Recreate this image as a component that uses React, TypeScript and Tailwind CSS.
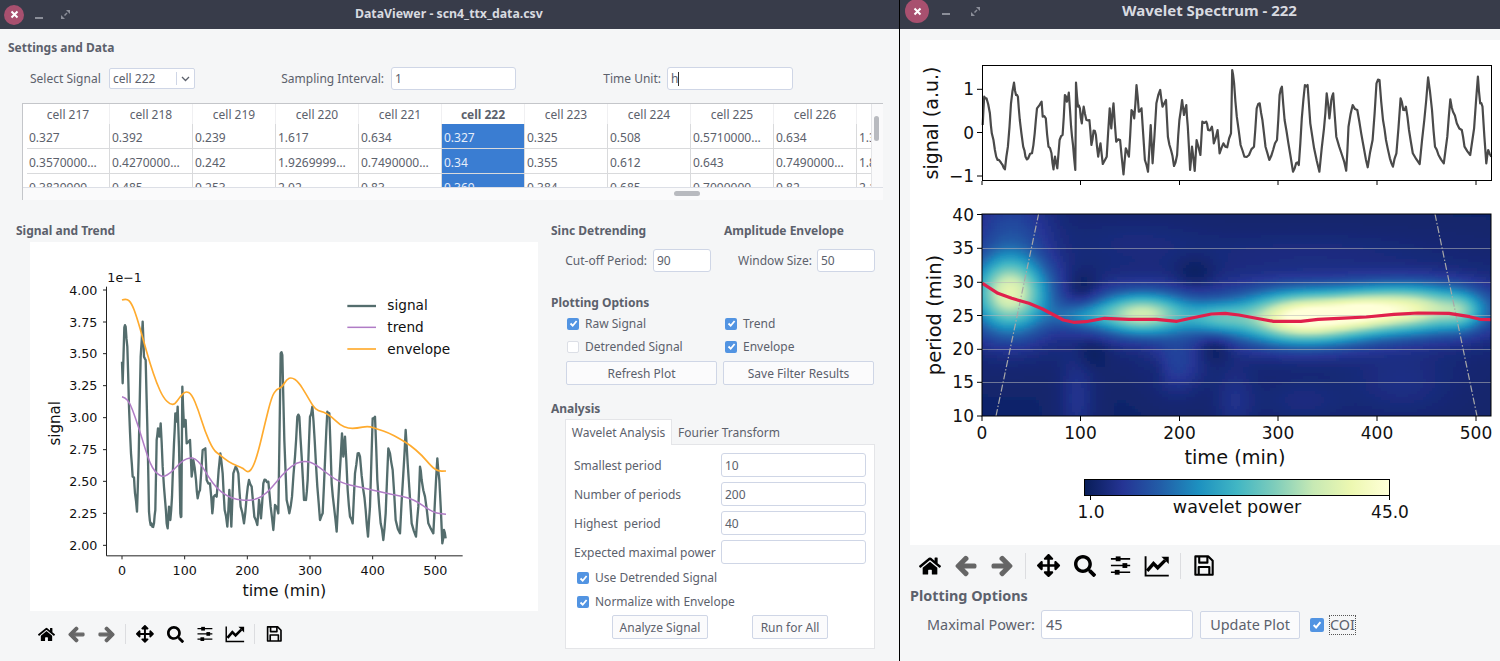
import type { ReactNode } from "react";
import { FaHome, FaArrowLeft, FaArrowRight, FaArrowsAlt, FaSearch } from "react-icons/fa";

const HEADERS = ["cell 217", "cell 218", "cell 219", "cell 220", "cell 221", "cell 222", "cell 223", "cell 224", "cell 225", "cell 226", "cell 227"];
const ROWS = [
  ["0.327", "0.392", "0.239", "1.617", "0.634", "0.327", "0.325", "0.508", "0.5710000…", "0.634", "1.317"],
  ["0.3570000…", "0.4270000…", "0.242", "1.9269999…", "0.7490000…", "0.34", "0.355", "0.612", "0.643", "0.7490000…", "1.812"],
  ["0.3829999", "0.485", "0.253", "2.02", "0.83", "0.369", "0.384", "0.685", "0.7090000", "0.82", "2.112"],
];

type Pt = [number, number];

// traced from the plots, in crop coordinates of the picture
const SIGNAL: Pt[] = [[306,365],[308,430],[313,262],[317,260],[322,320],[327,500],[333,640],[338,710],[342,712],[345,760],[351,815],[356,650],[362,350],[368,245],[372,350],[377,360],[382,560],[387,815],[392,855],[397,860],[402,850],[406,810],[410,600],[414,565],[418,590],[422,550],[428,680],[436,790],[440,850],[443,865],[447,800],[451,840],[456,770],[462,610],[466,520],[470,545],[473,500],[477,620],[481,820],[484,830],[487,440],[492,560],[497,540],[500,610],[510,600],[515,710],[520,660],[528,720],[533,775],[540,750],[548,630],[556,625],[560,720],[570,730],[577,820],[581,770],[590,770],[596,690],[601,640],[608,700],[614,810],[622,860],[628,750],[634,860],[640,700],[647,680],[655,700],[662,800],[672,850],[680,770],[687,720],[695,740],[703,830],[712,855],[717,780],[723,835],[730,730],[737,720],[745,725],[752,800],[760,870],[765,795],[775,820],[782,340],[787,345],[793,600],[800,780],[808,820],[816,770],[825,650],[832,530],[838,530],[845,650],[852,780],[858,780],[863,720],[870,530],[877,500],[884,600],[892,740],[900,840],[908,820],[916,640],[922,515],[928,520],[935,730],[942,800],[950,875],[958,720],[966,580],[970,650],[975,590],[983,750],[990,830],[998,850],[1005,700],[1013,640],[1020,650],[1030,750],[1037,810],[1044,890],[1050,800],[1058,535],[1065,530],[1072,720],[1082,850],[1090,900],[1097,820],[1105,625],[1110,640],[1118,690],[1127,840],[1140,880],[1150,700],[1157,570],[1163,670],[1175,850],[1188,890],[1195,800],[1200,680],[1205,720],[1215,770],[1225,850],[1240,880],[1245,780],[1252,655],[1258,720],[1267,910],[1272,870],[1277,895]];
const TREND: Pt[] = [[306,470],[315,472],[330,490],[345,530],[360,575],[375,625],[390,670],[405,695],[420,707],[432,710],[450,700],[470,680],[490,660],[510,653],[525,655],[545,675],[565,710],[590,745],[620,768],[650,778],[680,782],[710,778],[740,760],[770,725],[800,690],[830,668],[860,663],[885,672],[915,695],[945,718],[975,732],[1010,740],[1050,748],[1090,758],[1130,766],[1165,773],[1195,787],[1225,808],[1250,820],[1278,823]];
const ENVELOPE: Pt[] = [[306,180],[320,175],[335,190],[350,230],[370,300],[390,370],[410,430],[430,473],[450,493],[465,493],[480,470],[497,453],[515,462],[535,510],[555,575],[580,630],[600,645],[625,665],[650,677],[670,685],[683,698],[698,685],[715,635],[735,550],[755,470],[770,447],[785,443],[800,418],[815,412],[835,425],[860,465],[880,500],[895,513],[910,515],[935,530],[960,555],[985,565],[1010,565],[1045,558],[1075,568],[1105,578],[1140,597],[1170,615],[1205,645],[1235,680],[1255,694],[1278,693]];
const TOP_SIGNAL: Pt[] = [[216,255],[220,170],[226,175],[235,220],[240,280],[248,330],[255,360],[262,365],[268,375],[274,388],[282,320],[290,190],[298,128],[303,165],[308,170],[313,240],[322,320],[328,350],[335,355],[345,340],[352,280],[358,205],[370,185],[373,230],[381,235],[388,320],[396,340],[401,388],[405,350],[411,385],[417,300],[425,285],[431,165],[436,185],[441,158],[447,260],[452,315],[458,390],[460,128],[465,200],[470,205],[475,250],[480,200],[487,240],[495,240],[500,315],[506,272],[512,285],[518,350],[524,310],[530,372],[540,350],[548,205],[552,265],[558,190],[565,305],[575,300],[584,403],[590,325],[598,350],[605,210],[612,235],[618,135],[624,215],[631,205],[640,360],[648,395],[655,255],[660,370],[670,190],[680,150],[686,200],[695,180],[700,290],[708,330],[716,378],[724,345],[730,240],[737,180],[742,225],[748,195],[752,260],[758,390],[763,320],[770,393],[775,300],[785,345],[790,245],[800,245],[805,270],[815,260],[820,310],[830,270],[835,340],[845,310],[855,322],[865,280],[868,90],[873,130],[880,230],[890,315],[900,350],[912,345],[925,320],[932,205],[940,190],[947,240],[955,320],[965,360],[975,330],[985,300],[992,165],[998,140],[1005,240],[1015,310],[1027,395],[1035,370],[1042,375],[1050,235],[1058,135],[1065,135],[1072,250],[1082,325],[1096,395],[1108,265],[1115,160],[1122,235],[1127,180],[1132,160],[1140,290],[1155,345],[1166,392],[1172,260],[1183,195],[1195,210],[1205,280],[1213,330],[1222,382],[1235,300],[1245,130],[1253,120],[1262,240],[1270,300],[1280,355],[1288,380],[1297,340],[1308,175],[1315,210],[1322,200],[1330,270],[1340,340],[1358,372],[1370,240],[1380,112],[1390,210],[1398,320],[1407,345],[1421,370],[1430,290],[1438,178],[1445,215],[1455,250],[1468,270],[1475,320],[1490,345],[1500,265],[1510,110],[1516,190],[1522,200],[1532,370],[1537,330],[1545,350]];
const RIDGE: Pt[] = [[65,235],[110,265],[150,280],[200,295],[240,312],[300,345],[330,352],[365,350],[420,340],[490,343],[570,343],[630,349],[670,340],[730,327],[770,325],[810,330],[860,340],[910,349],[990,349],[1040,343],[1100,340],[1180,336],[1260,328],[1330,324],[1420,325],[1480,335],[1510,343],[1543,344]];

const toPoints = (pts: Pt[]) => pts.map(([x, y]) => `${x.toFixed(1)},${y.toFixed(1)}`).join(" ");

// adds wobbling midpoints so the trace keeps its measured look
const roughen = (pts: Pt[], amp: number): Pt[] =>
  pts.flatMap((p, i) => {
    const n = pts[i + 1];
    if (!n) return [p];
    const mid: Pt = [(p[0] + n[0]) / 2, (p[1] + n[1]) / 2 + Math.sin(i * 2.7) * amp];
    return [p, mid];
  });

// midpoint smoothing for the slow curves
const smooth = (pts: Pt[]) => {
  let d = `M${pts[0][0]} ${pts[0][1]}`;
  for (let i = 1; i < pts.length - 1; i++) {
    const mx = (pts[i][0] + pts[i + 1][0]) / 2;
    const my = (pts[i][1] + pts[i + 1][1]) / 2;
    d += ` Q${pts[i][0]} ${pts[i][1]} ${mx} ${my}`;
  }
  const last = pts[pts.length - 1];
  return `${d} L${last[0]} ${last[1]}`;
};

const YLGNBU = ["#081d58", "#253494", "#225ea8", "#1d91c0", "#41b6c4", "#7fcdbb", "#c7e9b4", "#edf8b1", "#ffffd9"];
const hex = (c: string) => [1, 3, 5].map((i) => parseInt(c.slice(i, i + 2), 16));
const colormap = (t: number) => {
  const p = Math.min(Math.max(t, 0), 1) * (YLGNBU.length - 1);
  const i = Math.min(Math.floor(p), YLGNBU.length - 2);
  const a = hex(YLGNBU[i]);
  const b = hex(YLGNBU[i + 1]);
  const f = p - i;
  return `rgb(${a.map((v, k) => Math.round(v + (b[k] - v) * f)).join(",")})`;
};

// x, y, sx, sy, amp in heatmap pixels
const BLOBS: number[][] = [
  [28, 78, 25, 26, 0.76],
  [29, 10, 28, 22, 0.12],
  [260, 95, 250, 30, 0.08],
  [160, 100, 32, 14, 0.66],
  [100, 102, 22, 9, 0.16],
  [235, 104, 22, 11, 0.28],
  [322, 104, 44, 17, 0.92],
  [425, 95, 46, 16, 0.76],
  [378, 98, 22, 12, 0.16],
  [480, 98, 14, 13, 0.2],
  [195, 150, 18, 20, 0.11],
  [95, 185, 12, 30, 0.07],
  [253, 187, 14, 24, 0.06],
  [320, 187, 30, 16, 0.04],
  [150, 25, 50, 16, 0.03],
  [330, 35, 90, 14, 0.03],
  [420, 170, 36, 22, 0.05],
];
const HOLES: number[][] = [
  [100, 76, 13, 13, 0.08],
  [213, 60, 14, 12, 0.06],
  [233, 133, 12, 11, 0.07],
  [110, 138, 12, 11, 0.05],
  [175, 155, 8, 10, 0.03],
];

const field = (x: number, y: number) => {
  let v = 0.04;
  for (const [bx, by, sx, sy, a] of BLOBS) {
    v += a * Math.exp(-((x - bx) ** 2) / (2 * sx * sx) - ((y - by) ** 2) / (2 * sy * sy));
  }
  for (const [bx, by, sx, sy, a] of HOLES) {
    v -= a * Math.exp(-((x - bx) ** 2) / (2 * sx * sx) - ((y - by) ** 2) / (2 * sy * sy));
  }
  return v;
};

const CELL = 3;
const HEAT_CELLS: { x: number; y: number; fill: string }[] = [];
for (let y = -6; y < 208; y += CELL) {
  for (let x = -6; x < 515; x += CELL) {
    HEAT_CELLS.push({ x: 982 + x, y: 214 + y, fill: colormap(field(x + CELL / 2, y + CELL / 2)) });
  }
}

const Section = ({ children, className = "" }: { children: ReactNode; className?: string }) => (
  <div className={`h-4 leading-[18px] text-[12px] font-bold text-[#5c616c] ${className}`}>{children}</div>
);

const Field = ({ value, h = "h-6", className = "", children }: { value?: string; h?: string; className?: string; children?: ReactNode }) => (
  <div className={`flex items-center px-[3px] bg-white border border-[#cfd6e6] rounded-[3px] text-[12px] text-[#5c616c] ${h} ${className}`}>
    {value}
    {children}
  </div>
);

const Check = ({ checked, label, className = "" }: { checked?: boolean; label: string; className?: string }) => (
  <div className={`flex items-center gap-[6px] text-[12px] text-[#5c616c] ${className}`}>
    {checked ? (
      <div className="w-3 h-3 rounded-[2px] bg-[#5294e2] flex items-center justify-center">
        <svg width="9" height="9" viewBox="0 0 9 9" fill="none" stroke="white" strokeWidth="1.8">
          <path d="M1.5 4.5 L3.7 6.7 L7.6 2" />
        </svg>
      </div>
    ) : (
      <div className="w-3 h-3 rounded-[2px] bg-white border border-[#dcdfe6]" />
    )}
    <span>{label}</span>
  </div>
);

const Btn = ({ children, className = "" }: { children: ReactNode; className?: string }) => (
  <div className={`h-6 pt-px flex items-center justify-center bg-[#fbfbfc] border border-[#cfd6e6] rounded-[2px] text-[12px] text-[#5c616c] ${className}`}>
    {children}
  </div>
);

const TitleBar = ({ title, compact }: { title: string; compact?: boolean }) => (
  <div className={`h-[29px] shrink-0 bg-[#383c4a] flex items-center relative ${compact ? "pb-[7px]" : ""}`}>
    <div className={`rounded-full bg-[#a8506f] flex items-center justify-center ${compact ? "w-6 h-6 ml-[5px]" : "w-5 h-5 ml-[4px]"}`}>
      <svg width="9" height="9" viewBox="0 0 9 9" stroke="white" strokeWidth="2">
        <path d="M1.5 1.5 L7.5 7.5 M7.5 1.5 L1.5 7.5" />
      </svg>
    </div>
    <div className={`w-2 h-[2px] bg-[#8b8e99] mt-[6px] ${compact ? "ml-[13px]" : "ml-[11px]"}`} />
    <svg className={compact ? "ml-[21px]" : "ml-[18px]"} width="9" height="9" viewBox="0 0 9 9" fill="#8b8e99">
      <path d="M5 0 H9 V4 Z M0 5 L4 9 H0 Z M3 5 L5.5 2.5 L6.5 3.5 L4 6 Z" />
    </svg>
    <div className={`absolute font-bold text-[#d8dae0] whitespace-nowrap ${compact ? "left-[222px] -top-px text-[15px]" : "left-[355px] top-[5px] text-[12.3px]"}`}>
      {title}
    </div>
  </div>
);

const Table = () => (
  <div className="ml-[22px] mt-[13px] w-[861px] h-[97px] border-t border-l border-[#c4c6ca] bg-white flex flex-col">
    <div className="flex h-[84px] border-b border-[#dcdfe6]">
      <div className="w-1 shrink-0" />
      <div className="flex-1 overflow-hidden">
        <div className="grid grid-cols-[repeat(11,83px)] grid-rows-[20px_25px_25px_25px] w-[913px]">
          {HEADERS.map((h, i) => (
            <div
              key={h}
              className={`pt-px flex items-center justify-center text-[12px] text-[#5c616c] border-r border-[#f0f0f2] ${i === 5 ? "font-bold" : ""}`}
            >
              {h}
            </div>
          ))}
          {ROWS.flatMap((row, r) =>
            row.map((v, i) => (
              <div
                key={`${r}-${i}`}
                className={`px-[2px] text-[12px] leading-[27px] whitespace-nowrap overflow-hidden border-b border-r border-[#d9dadc] ${i === 5 ? "bg-[#3a7dd2] text-[#e6eefa]" : "text-[#5c616c]"}`}
              >
                {v}
              </div>
            ))
          )}
        </div>
      </div>
      <div className="w-3 shrink-0 bg-[#fafafb] border-l border-[#e4e5e8] pt-3 pl-[2px]">
        <div className="w-[5px] h-[25px] rounded-full bg-[#b8babf]" />
      </div>
    </div>
    <div className="h-3 bg-[#fafafb] pt-[3px]">
      <div className="ml-[651px] w-[26px] h-[5px] rounded-full bg-[#b8babf]" />
    </div>
  </div>
);

const SignalPlot = () => {
  const yTicks: [string, number][] = [["4.00", 150], ["3.75", 246], ["3.50", 341], ["3.25", 437], ["3.00", 533], ["2.75", 629], ["2.50", 724], ["2.25", 820], ["2.00", 916]];
  const xTicks: [string, number][] = [["0", 306], ["100", 494], ["200", 682], ["300", 870], ["400", 1058], ["500", 1246]];
  return (
    <svg
      className="block ml-[30px] mt-1 bg-white font-['DejaVu_Sans',sans-serif]"
      width="508"
      height="369"
      viewBox="30 6 1524 1107"
    >
      <polyline points={toPoints(roughen(SIGNAL, 7))} fill="none" stroke="#546d6d" strokeWidth="7" strokeLinejoin="round" />
      <path d={smooth(TREND)} fill="none" stroke="#b07cc6" strokeWidth="4.5" />
      <path d={smooth(ENVELOPE)} fill="none" stroke="#ffab2e" strokeWidth="5" />
      <path d="M259.5 140 V947.5 H1328" fill="none" stroke="#222" strokeWidth="3" />
      {yTicks.map(([l, y]) => (
        <g key={l}>
          <path d={`M249 ${y} H259`} stroke="#222" strokeWidth="3" />
          <text x="232" y={y + 14} textAnchor="end" fontSize="38" fill="#111">{l}</text>
        </g>
      ))}
      {xTicks.map(([l, x]) => (
        <g key={l}>
          <path d={`M${x} 948 V958`} stroke="#222" strokeWidth="3" />
          <text x={x} y="1004" textAnchor="middle" fontSize="38" fill="#111">{l}</text>
        </g>
      ))}
      <text x="262" y="127" fontSize="38" fill="#111">1e−1</text>
      <text x="793" y="1068" textAnchor="middle" fontSize="48" fill="#111">time (min)</text>
      <text transform="translate(119 550) rotate(-90)" textAnchor="middle" fontSize="45" fill="#111">signal</text>
      <path d="M982 198 H1068" stroke="#546d6d" strokeWidth="7" />
      <path d="M982 262 H1068" stroke="#b07cc6" strokeWidth="4.5" />
      <path d="M982 327 H1068" stroke="#ffab2e" strokeWidth="5" />
      <text x="1102" y="210" fontSize="41" fill="#111">signal</text>
      <text x="1102" y="276" fontSize="41" fill="#111">trend</text>
      <text x="1102" y="341" fontSize="41" fill="#111">envelope</text>
    </svg>
  );
};

const SpectrumPlot = () => {
  const topY: [string, number][] = [["1", 89.3], ["0", 132.5], ["−1", 176]];
  const xs: [string, number][] = [["0", 982], ["100", 1080.5], ["200", 1179.5], ["300", 1278], ["400", 1377], ["500", 1476]];
  const hmY: [string, number][] = [["40", 214.5], ["35", 248.3], ["30", 282.3], ["25", 315.5], ["20", 349.3], ["15", 382.3], ["10", 416]];
  const signal = roughen(TOP_SIGNAL, 6).map(([x, y]): Pt => [900 + x / 2.613, 40 + y / 3]);
  const ridge = RIDGE.map(([x, y]): Pt => [960 + x / 2.904, 205 + y / 3]);
  return (
    <svg
      className="block ml-[10px] mt-[11px] bg-white font-['DejaVu_Sans',sans-serif]"
      width="590"
      height="505"
      viewBox="910 40 590 505"
    >
      <defs>
        <clipPath id="heat-clip">
          <rect x="982" y="214" width="509" height="202" />
        </clipPath>
        <filter id="heat-blur" x="0" y="0" width="100%" height="100%">
          <feGaussianBlur stdDeviation="1.2" />
        </filter>
        <linearGradient id="cbar">
          {YLGNBU.map((c, i) => (
            <stop key={c} offset={i / (YLGNBU.length - 1)} stopColor={c} />
          ))}
        </linearGradient>
      </defs>

      {/* signal panel */}
      <polyline points={toPoints(signal)} fill="none" stroke="#4a4a4a" strokeWidth="2.2" strokeLinejoin="round" />
      <rect x="982.5" y="65.5" width="509" height="115" fill="none" stroke="#000" />
      {topY.map(([l, y]) => (
        <g key={l}>
          <path d={`M977 ${y} H982`} stroke="#000" />
          <text x="974" y={y + 6} textAnchor="end" fontSize="17" fill="#111">{l}</text>
        </g>
      ))}
      {xs.map(([l, x]) => (
        <path key={l} d={`M${x} 181 V185`} stroke="#000" />
      ))}
      <text transform="translate(938 123) rotate(-90)" textAnchor="middle" fontSize="19" fill="#111">signal (a.u.)</text>

      {/* wavelet heatmap */}
      <g clipPath="url(#heat-clip)">
        <g filter="url(#heat-blur)">
          {HEAT_CELLS.map((c) => (
            <rect key={`${c.x}-${c.y}`} x={c.x} y={c.y} width={CELL + 0.5} height={CELL + 0.5} fill={c.fill} />
          ))}
        </g>
        {[248.5, 282.5, 315.5, 349.5, 382.5].map((y) => (
          <path key={y} d={`M982 ${y} H1491`} stroke="#b8b8b8" strokeOpacity="0.55" />
        ))}
        <path d="M996 416 L1038.6 214 M1435 214 L1477 416" stroke="#a8a8a8" strokeWidth="1.2" strokeDasharray="7 2 1.5 2" fill="none" />
        <polyline points={toPoints(ridge)} fill="none" stroke="#e0204c" strokeWidth="3.2" strokeLinejoin="round" />
      </g>
      <rect x="982" y="214" width="509" height="202" fill="none" stroke="#000" />
      {hmY.map(([l, y]) => (
        <g key={l}>
          <path d={`M977 ${y} H982`} stroke="#000" />
          <text x="974" y={y + 6} textAnchor="end" fontSize="17" fill="#111">{l}</text>
        </g>
      ))}
      {xs.map(([l, x]) => (
        <g key={l}>
          <path d={`M${x} 416 V421`} stroke="#000" />
          <text x={x} y="439" textAnchor="middle" fontSize="17" fill="#111">{l}</text>
        </g>
      ))}
      <text transform="translate(941 315) rotate(-90)" textAnchor="middle" fontSize="19.5" fill="#111">period (min)</text>
      <text x="1235" y="464" textAnchor="middle" fontSize="19.3" fill="#111">time (min)</text>

      {/* colorbar */}
      <rect x="1084.5" y="479.5" width="305" height="16" fill="url(#cbar)" stroke="#000" />
      <path d="M1090.5 496 V500 M1389.5 496 V500" stroke="#000" />
      <text x="1091" y="518" textAnchor="middle" fontSize="17" fill="#111">1.0</text>
      <text x="1390" y="518" textAnchor="middle" fontSize="17" fill="#111">45.0</text>
      <text x="1237" y="513" textAnchor="middle" fontSize="17.5" fill="#111">wavelet power</text>
    </svg>
  );
};

const SlidersIcon = ({ size }: { size: number }) => (
  <svg width={size} height={size} viewBox="0 0 24 24" fill="#000">
    <path d="M2 5 H22 M2 12 H22 M2 19 H22" stroke="#000" strokeWidth="1.7" />
    <rect x="7" y="2.5" width="5" height="5" />
    <rect x="14" y="9.5" width="5" height="5" />
    <rect x="6" y="16.5" width="5" height="5" />
  </svg>
);

const ChartIcon = ({ size }: { size: number }) => (
  <svg width={size} height={size} viewBox="0 0 24 24" fill="none" stroke="#000">
    <path d="M1.5 3 V21.5 H23.5" strokeWidth="1.8" />
    <path d="M3 17 L9 10 L13 14 L20 7" strokeWidth="3.2" />
    <path d="M16.5 3.5 H23.5 V10.5 Z" fill="#000" strokeWidth="0" />
  </svg>
);

const SaveIcon = ({ size }: { size: number }) => (
  <svg width={size} height={size} viewBox="0 0 24 24" fill="none" stroke="#000" strokeWidth="2.2" strokeLinejoin="round">
    <path d="M3.5 2.5 H17 L21.5 7 V21.5 H3.5 Z" />
    <path d="M7.5 2.5 V9 H16 V2.5" />
    <path d="M7 21.5 V13.5 H18 V21.5" />
  </svg>
);

const Toolbar = ({ size, cell, gap, className = "" }: { size: number; cell: string; gap: string; className?: string }) => {
  const item = (icon: ReactNode) => <div className={`flex justify-center ${cell}`}>{icon}</div>;
  const sep = (
    <div className={gap}>
      <div className="w-px h-full bg-[#dcdde0]" />
    </div>
  );
  return (
    <div className={`flex items-center text-black ${className}`}>
      {item(<FaHome size={size} />)}
      {item(<FaArrowLeft size={size} color="#666" stroke="#666" strokeWidth={40} />)}
      {item(<FaArrowRight size={size} color="#666" stroke="#666" strokeWidth={40} />)}
      {sep}
      {item(<FaArrowsAlt size={size * 1.05} />)}
      {item(<FaSearch size={size} />)}
      {item(<SlidersIcon size={size * 1.05} />)}
      {item(<ChartIcon size={size * 1.15} />)}
      {sep}
      {item(<SaveIcon size={size * 1.05} />)}
    </div>
  );
};

const SidePanel = () => (
  <div className="w-[349px] shrink-0">
    <div className="flex">
      <Section className="w-[173px]">Sinc Detrending</Section>
      <Section>Amplitude Envelope</Section>
    </div>
    <div className="flex items-center mt-[11px] text-[12px] text-[#5c616c]">
      <div className="w-[102px] text-right pr-[6px] pt-px">Cut-off Period:</div>
      <Field value="90" h="h-[23px]" className="w-[58px] pt-px" />
      <div className="w-[106px] text-right pr-[5px] pt-px">Window Size:</div>
      <Field value="50" h="h-[23px]" className="w-[58px] pt-px" />
    </div>

    <Section className="mt-[22px]">Plotting Options</Section>
    <div className="mt-[2px] pl-4 grid grid-cols-[158px_1fr] auto-rows-[23px] items-center">
      <Check checked label="Raw Signal" />
      <Check checked label="Trend" />
      <Check label="Detrended Signal" />
      <Check checked label="Envelope" />
    </div>
    <div className="flex gap-[6px] ml-[15px] mt-[3px]">
      <Btn className="w-[151px]">Refresh Plot</Btn>
      <Btn className="w-[151px]">Save Filter Results</Btn>
    </div>

    <Section className="mt-[15px]">Analysis</Section>
    <div className="ml-[14px] mt-[3px] flex items-end h-[26px] text-[12px] text-[#5c616c]">
      <div className="w-[107px] h-[26px] bg-white border border-b-0 border-[#e4e5e8] flex items-center justify-center relative z-10">Wavelet Analysis</div>
      <div className="pl-[6px] pb-[3px]">Fourier Transform</div>
    </div>
    <div className="ml-[14px] -mt-px w-[310px] h-[205px] bg-white border border-[#e4e5e8] pl-[8px] pt-[8px] text-[12px] text-[#5c616c]">
      <div className="flex flex-col gap-[5px]">
        {[["Smallest period", "10"], ["Number of periods", "200"], ["Highest  period", "40"], ["Expected maximal power", ""]].map(([l, v]) => (
          <div key={l} className="flex items-center">
            <div className="w-[147px] whitespace-pre pt-px">{l}</div>
            <Field value={v} className="w-[145px] pt-px" />
          </div>
        ))}
      </div>
      <Check checked label="Use Detrended Signal" className="h-6 ml-[3px] mt-[2px]" />
      <Check checked label="Normalize with Envelope" className="h-6 ml-[3px]" />
      <div className="flex mt-px ml-[38px] gap-[44px]">
        <Btn className="w-[96px]">Analyze Signal</Btn>
        <Btn className="w-[76px]">Run for All</Btn>
      </div>
    </div>
  </div>
);

export default function App() {
  return (
    <div className="w-[1500px] h-[661px] flex overflow-hidden bg-[#f5f6f7] font-['Noto_Sans',sans-serif]">
      <div className="w-[899px] shrink-0 flex flex-col">
        <TitleBar title="DataViewer - scn4_ttx_data.csv" />
        <Section className="ml-2 mt-[10px]">Settings and Data</Section>
        <div className="flex items-center mt-[12px] pl-[30px] text-[12px] text-[#5c616c]">
          <div className="w-[79px]">Select Signal</div>
          <div className="w-[86px] h-[21px] bg-white border border-[#cfd6e6] rounded-[2px] flex items-center pl-[3px]">
            <span className="flex-1">cell 222</span>
            <span className="h-[13px] w-px bg-[#cfd6e6]" />
            <svg className="mx-1" width="9" height="6" viewBox="0 0 9 6" fill="none" stroke="#5c616c" strokeWidth="1.3">
              <path d="M1 1 L4.5 4.5 L8 1" />
            </svg>
          </div>
          <div className="w-[196px] text-right pr-[7px]">Sampling Interval:</div>
          <Field value="1" h="h-[23px]" className="w-[125px]" />
          <div className="w-[151px] text-right pr-[6px]">Time Unit:</div>
          <Field h="h-[23px]" className="w-[126px] border-[#b9c8e6]" value="h">
            <span className="w-px h-[14px] bg-[#333]" />
          </Field>
        </div>
        <Table />
        <div className="flex mt-[22px]">
          <div className="w-[551px] shrink-0">
            <Section className="ml-4">Signal and Trend</Section>
            <SignalPlot />
            <Toolbar size={17} cell="w-[30px]" gap="h-[20px] px-1" className="ml-[31px] mt-[13px]" />
          </div>
          <SidePanel />
        </div>
      </div>
      <div className="w-px shrink-0 bg-black" />
      <div className="flex-1 flex flex-col">
        <TitleBar title="Wavelet Spectrum - 222" compact />
        <SpectrumPlot />
        <Toolbar size={22} cell="w-[36px]" gap="h-[26px] px-[5px]" className="ml-3 h-[42px]" />
        <div className="ml-[10px] mt-px text-[14.4px] leading-4 font-bold text-[#5c616c]">Plotting Options</div>
        <div className="flex items-center ml-[27px] mt-[6px] text-[14.4px] text-[#5c616c]">
          <div className="w-[114px]">Maximal Power:</div>
          <div className="w-[152px] h-[29px] bg-white border border-[#cfd6e6] rounded-[3px] flex items-center px-1">45</div>
          <div className="ml-[7px] w-[100px] h-[28px] bg-[#fbfbfc] border border-[#cfd6e6] rounded-[2px] flex items-center justify-center">Update Plot</div>
          <div className="ml-[10px] w-[14px] h-[14px] rounded-[2px] bg-[#5294e2] flex items-center justify-center">
            <svg width="10" height="10" viewBox="0 0 9 9" fill="none" stroke="white" strokeWidth="1.8">
              <path d="M1.5 4.5 L3.7 6.7 L7.6 2" />
            </svg>
          </div>
          <div className="ml-[6px] outline-1 outline-dotted outline-[#555] h-[18px] leading-[18px]">COI</div>
        </div>
      </div>
    </div>
  );
}
